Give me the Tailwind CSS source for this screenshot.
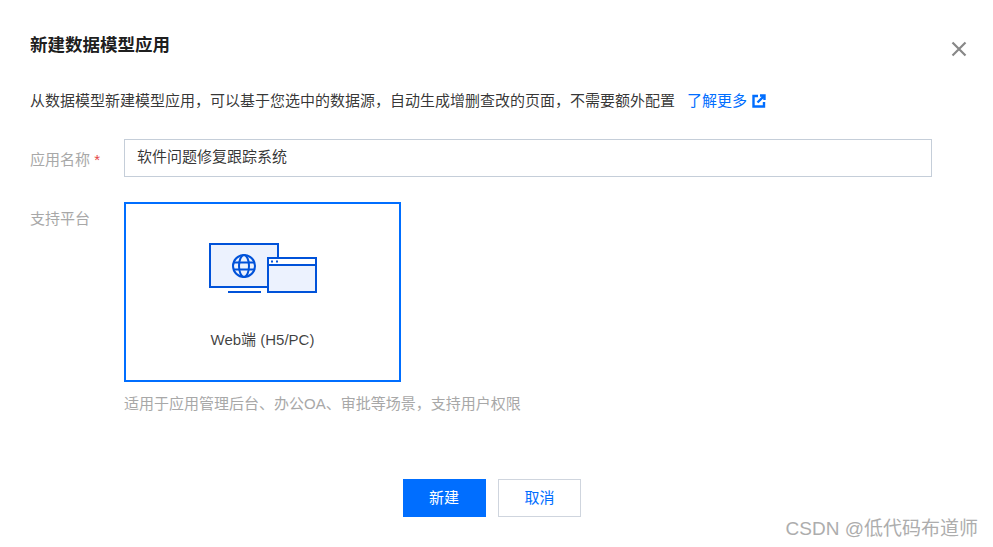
<!DOCTYPE html>
<html lang="zh-CN">
<head>
  <meta charset="UTF-8" />
  <title>新建数据模型应用</title>
  <script src="https://cdn.jsdelivr.net/npm/@tailwindcss/browser@4"></script>
</head>
<body class="bg-white font-['Liberation_Sans','Noto_Sans_CJK_SC',sans-serif]">
  <div class="relative h-[547px] w-[993px] overflow-hidden pl-[30px] pr-[61px] pt-[34px]">
    <!-- Header -->
    <div class="flex h-[22px] items-center justify-between">
      <h2 class="text-[17.5px] font-bold leading-[22px] text-black/90">新建数据模型应用</h2>
    </div>
    <button class="absolute left-[951px] top-[41px] text-[#888888]" aria-label="关闭">
      <svg width="16" height="16" viewBox="0 0 16 16" fill="none" stroke="currentColor" stroke-width="2.2">
        <path d="M1.5 1.5L14.5 14.5M14.5 1.5L1.5 14.5" />
      </svg>
    </button>

    <!-- Description -->
    <p class="mt-[35px] flex h-[20px] items-center text-[15px] leading-[20px] text-black/80">
      <span>从数据模型新建模型应用，可以基于您选中的数据源，自动生成增删查改的页面，不需要额外配置</span>
      <a class="ml-[12px] text-[#006eff]">了解更多</a>
      <svg class="ml-[5px]" width="14" height="14" viewBox="0 0 14 14" fill="none" stroke="#006eff" stroke-width="2.4">
        <path d="M6 2H1.500V12.500H12V8" />
        <path d="M5.500 8.500L12 2M8 1.500H12.500V6" />
      </svg>
    </p>

    <!-- Form -->
    <div class="mt-[28px] flex h-[38px] items-center">
      <label class="w-[94px] pt-[4px] text-[15px] text-[#a8a8a8]">应用名称 <span class="text-[#e54545]">*</span></label>
      <div class="flex h-[38px] w-[808px] items-center border border-[#c5ced9] pb-[1px] pl-[12px] text-[15px] text-black/80">软件问题修复跟踪系统</div>
    </div>

    <div class="mt-[25px] flex">
      <label class="w-[94px] pt-[7px] text-[15px] leading-[20px] text-[#a8a8a8]">支持平台</label>
      <div>
        <div class="flex h-[180px] w-[277px] flex-col items-center border-2 border-[#006eff]">
          <svg class="mt-[39px]" width="111" height="54" viewBox="0 0 111 54" fill="none" stroke="#0052d9" stroke-width="2">
            <rect x="3" y="1" width="68" height="43" fill="#ecf2fe" />
            <circle cx="37" cy="23" r="11" />
            <ellipse cx="37" cy="23" rx="5" ry="11" />
            <path d="M26 19.500H48M26 26.500H48" />
            <path d="M21 49H54" />
            <rect x="61" y="15" width="48" height="34" fill="#ecf2fe" />
            <rect x="61" y="15" width="48" height="7" fill="#ffffff" />
            <path d="M64 18.500H66M69 18.500H71" />
          </svg>
          <span class="mt-[33px] text-[15px] leading-[20px] text-black/75">Web端 (H5/PC)</span>
        </div>
        <p class="mt-[12px] text-[15px] leading-[20px] text-[#a8a8a8]">适用于应用管理后台、办公OA、审批等场景，支持用户权限</p>
      </div>
    </div>

    <!-- Footer buttons -->
    <div class="mt-[65px] flex justify-center gap-[12px] pl-[22px]">
      <button class="h-[38px] w-[83px] bg-[#006eff] pr-[1px] text-[15px] text-white">新建</button>
      <button class="h-[38px] w-[83px] border border-[#cfd5de] bg-white text-[15px] text-[#006eff]">取消</button>
    </div>

    <!-- Watermark -->
    <div class="absolute bottom-[5px] right-[15px] text-[19px] leading-[26px] text-[#adadad]">CSDN @低代码布道师</div>
  </div>
</body>
</html>
